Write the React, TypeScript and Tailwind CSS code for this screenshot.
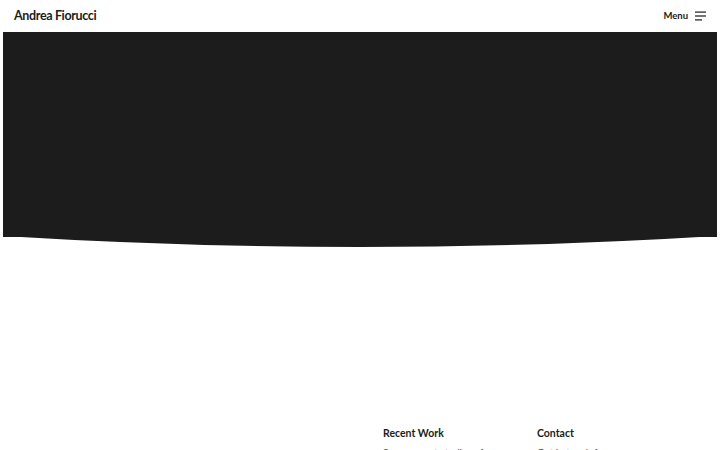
import { useState } from "react";

const font = { fontFamily: "Lato, 'Open Sans', sans-serif" };

const MenuIcon = () => (
  <svg width="11" height="10" viewBox="0 0 11 10" className="text-[#1b1c1b]">
    <rect x="0" y="0.5" width="11" height="1.2" fill="currentColor" />
    <rect x="0" y="4.4" width="11" height="1.2" fill="currentColor" />
    <rect x="0" y="8.3" width="7" height="1.2" fill="currentColor" />
  </svg>
);

export default function App() {
  const [open, setOpen] = useState(false);

  return (
    <div className="w-[720px] h-[450px] overflow-hidden bg-white" style={font}>
      <header className="h-8 flex items-center justify-between pl-[14px] pr-[14px]">
        <span className="text-[12.5px] font-bold text-[#1b1c1b] tracking-[-0.35px]">
          Andrea Fiorucci
        </span>
        <button
          onClick={() => setOpen(!open)}
          className="flex items-center gap-[7px] text-[9.5px] font-bold text-[#1b1c1b]"
        >
          Menu
          <MenuIcon />
        </button>
      </header>

      <section className="mx-[3px]">
        <div className="h-[205px] bg-[#1b1c1b]" />
        <svg width="714" height="11" viewBox="0 0 714 11" className="block -mt-px">
          <path d="M0 0 H714 Q357 22 0 0 Z" fill="#1b1c1b" />
        </svg>
      </section>

      <footer className="mt-[179px] grid grid-cols-[154px_1fr] pl-[383px] text-[#1b1c1b]">
        <div>
          <h3 className="text-[10.5px] font-bold">Recent Work</h3>
          <p className="mt-[3px] text-[10px] text-[#555]">Some recent studies of</p>
        </div>
        <div>
          <h3 className="text-[10.5px] font-bold">Contact</h3>
          <p className="mt-[3px] text-[10px] text-[#555]">Get in touch for</p>
        </div>
      </footer>
    </div>
  );
}
